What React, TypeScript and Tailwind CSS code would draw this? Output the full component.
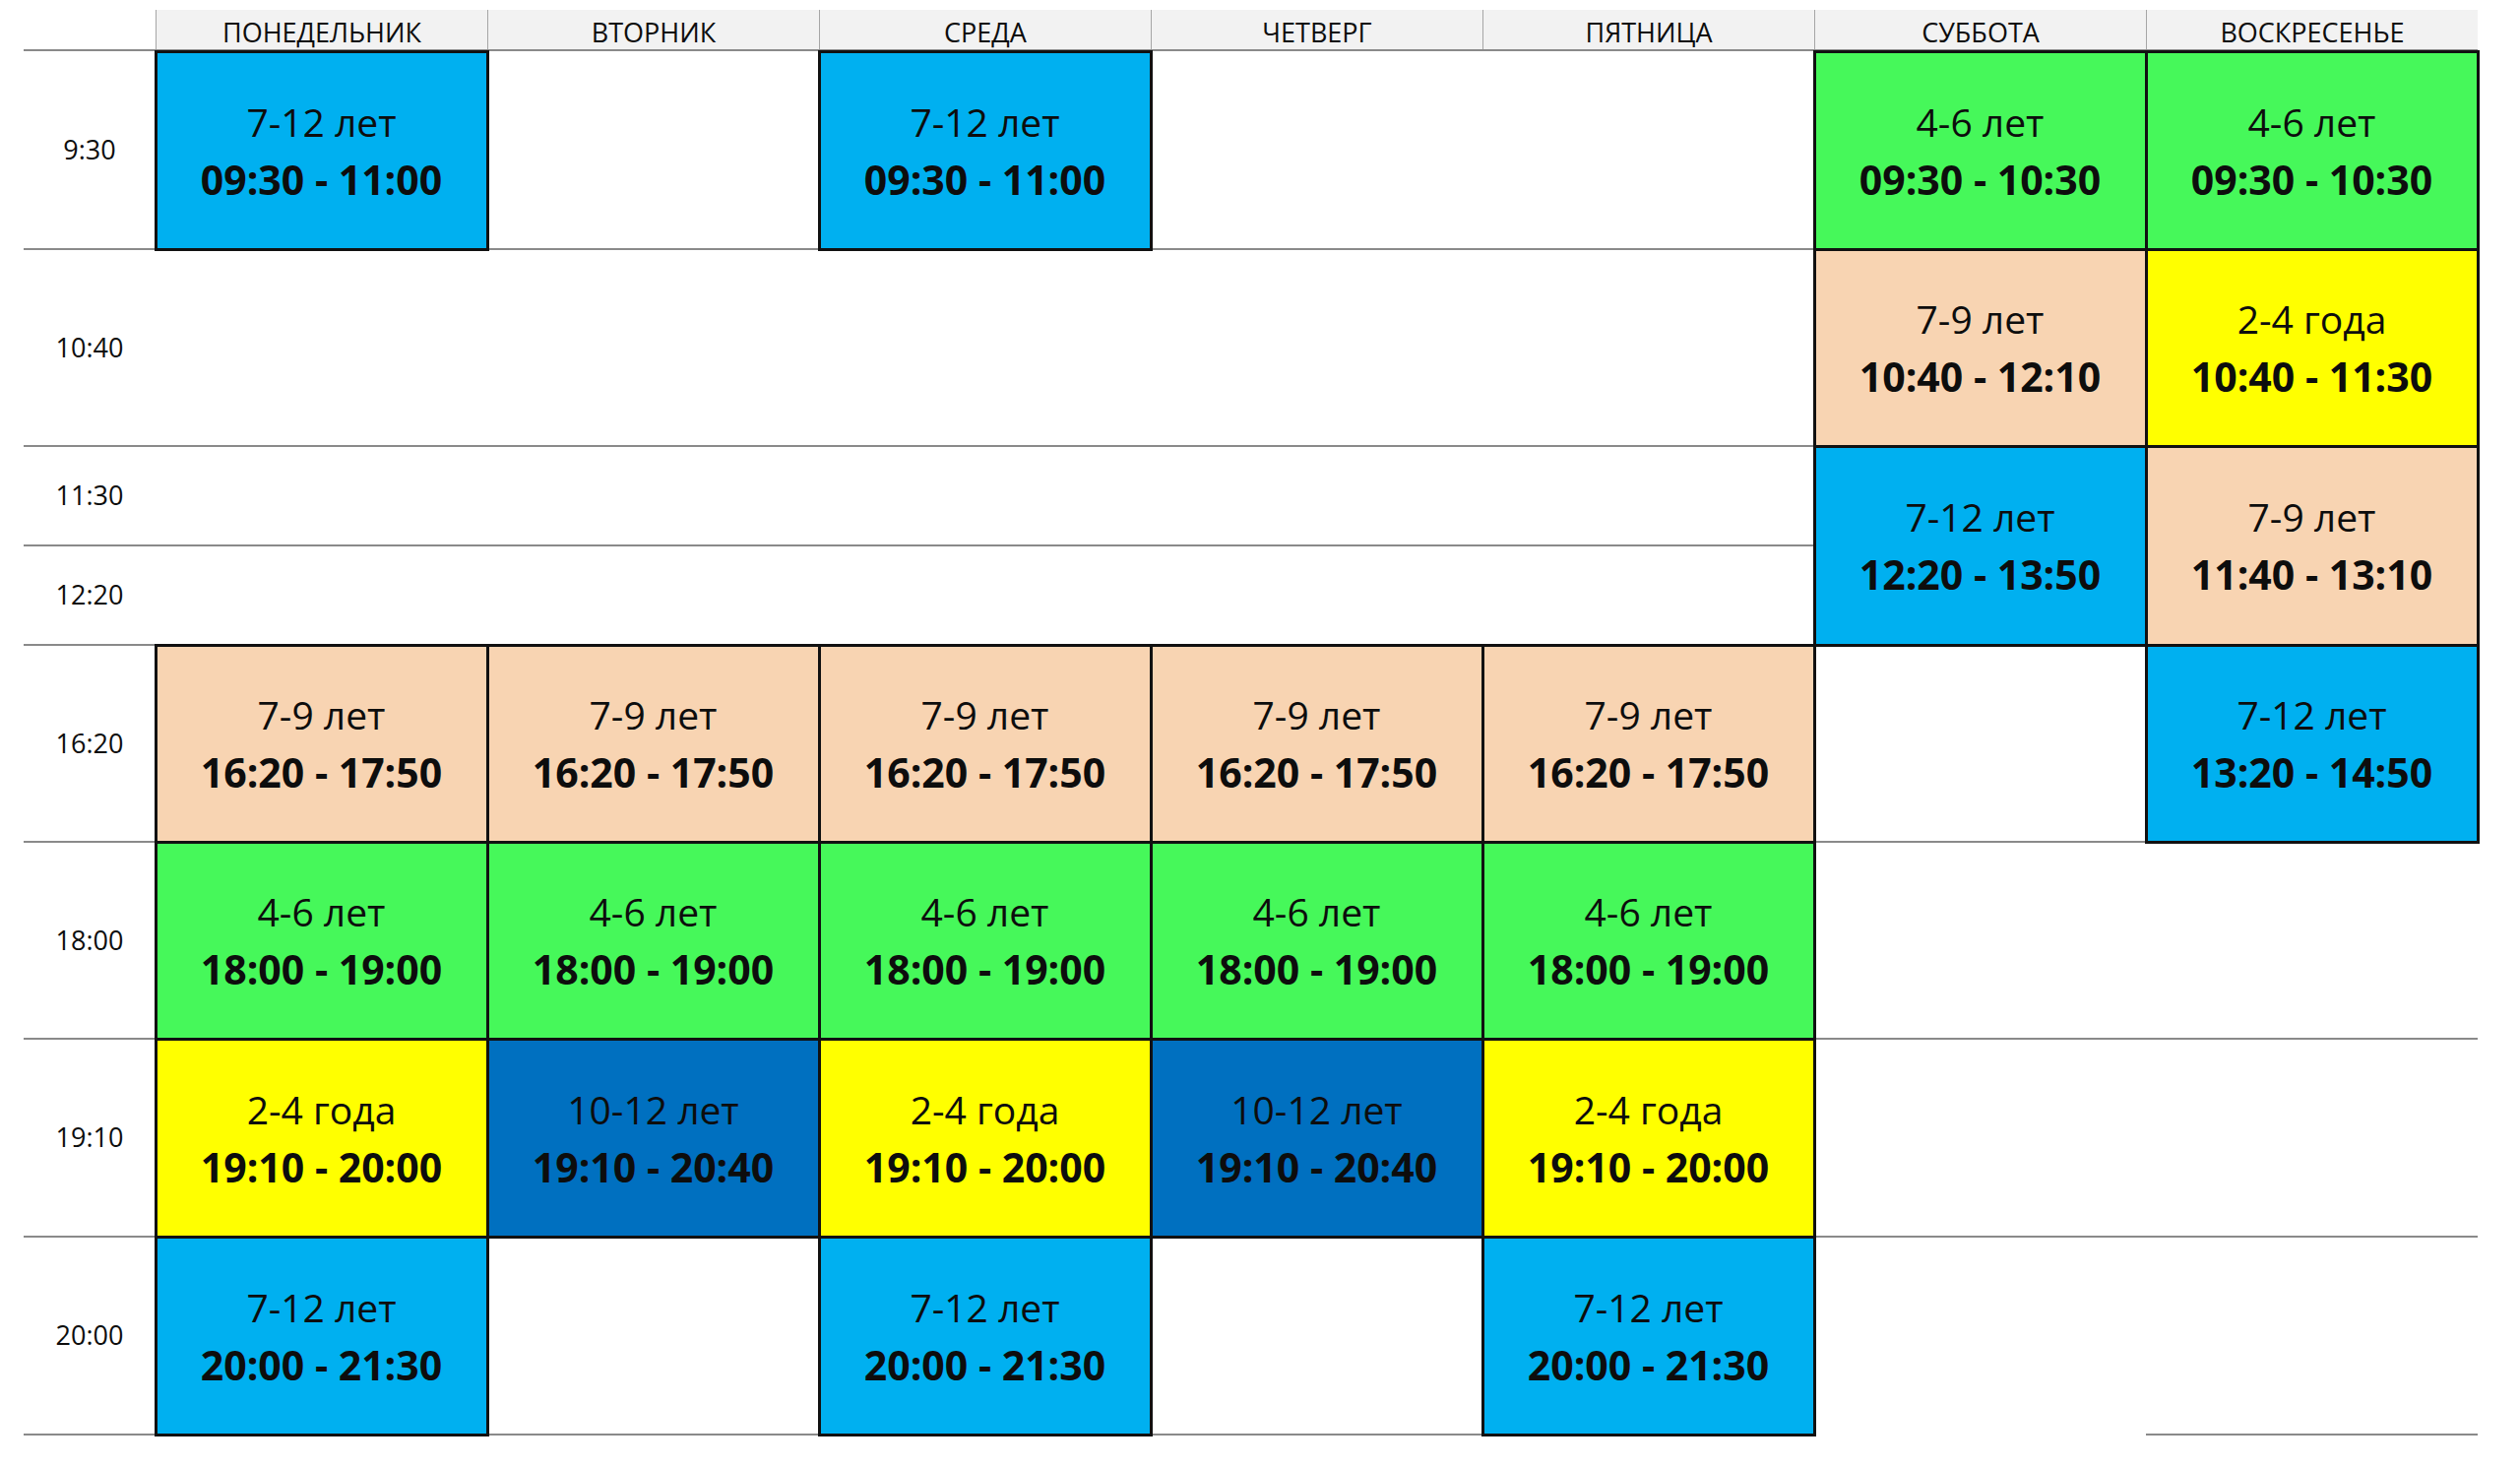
const days = ["ПОНЕДЕЛЬНИК", "ВТОРНИК", "СРЕДА", "ЧЕТВЕРГ", "ПЯТНИЦА", "СУББОТА", "ВОСКРЕСЕНЬЕ"];

const times = [
  { label: "9:30", row: "row-start-1" },
  { label: "10:40", row: "row-start-2" },
  { label: "11:30", row: "row-start-3" },
  { label: "12:20", row: "row-start-4" },
  { label: "16:20", row: "row-start-5" },
  { label: "18:00", row: "row-start-6" },
  { label: "19:10", row: "row-start-7" },
  { label: "20:00", row: "row-start-8" },
];

const colors = {
  blue: "bg-[#00b0f0]",
  green: "bg-[#46f85a]",
  peach: "bg-[#f8d4b2]",
  yellow: "bg-[#ffff00]",
  navy: "bg-[#0070c0]",
};

type Lesson = { pos: string; color: keyof typeof colors; age: string; time: string };

// pos = колонка + строка (классы пишем целиком)
const lessons: Lesson[] = [
  { pos: "col-start-2 row-start-1", color: "blue", age: "7-12 лет", time: "09:30 - 11:00" },
  { pos: "col-start-4 row-start-1", color: "blue", age: "7-12 лет", time: "09:30 - 11:00" },
  { pos: "col-start-7 row-start-1", color: "green", age: "4-6 лет", time: "09:30 - 10:30" },
  { pos: "col-start-8 row-start-1", color: "green", age: "4-6 лет", time: "09:30 - 10:30" },

  { pos: "col-start-7 row-start-2", color: "peach", age: "7-9 лет", time: "10:40 - 12:10" },
  { pos: "col-start-8 row-start-2", color: "yellow", age: "2-4 года", time: "10:40 - 11:30" },

  { pos: "col-start-7 row-start-3 row-span-2", color: "blue", age: "7-12 лет", time: "12:20 - 13:50" },
  { pos: "col-start-8 row-start-3 row-span-2", color: "peach", age: "7-9 лет", time: "11:40 - 13:10" },

  { pos: "col-start-2 row-start-5", color: "peach", age: "7-9 лет", time: "16:20 - 17:50" },
  { pos: "col-start-3 row-start-5", color: "peach", age: "7-9 лет", time: "16:20 - 17:50" },
  { pos: "col-start-4 row-start-5", color: "peach", age: "7-9 лет", time: "16:20 - 17:50" },
  { pos: "col-start-5 row-start-5", color: "peach", age: "7-9 лет", time: "16:20 - 17:50" },
  { pos: "col-start-6 row-start-5", color: "peach", age: "7-9 лет", time: "16:20 - 17:50" },
  { pos: "col-start-8 row-start-5", color: "blue", age: "7-12 лет", time: "13:20 - 14:50" },

  { pos: "col-start-2 row-start-6", color: "green", age: "4-6 лет", time: "18:00 - 19:00" },
  { pos: "col-start-3 row-start-6", color: "green", age: "4-6 лет", time: "18:00 - 19:00" },
  { pos: "col-start-4 row-start-6", color: "green", age: "4-6 лет", time: "18:00 - 19:00" },
  { pos: "col-start-5 row-start-6", color: "green", age: "4-6 лет", time: "18:00 - 19:00" },
  { pos: "col-start-6 row-start-6", color: "green", age: "4-6 лет", time: "18:00 - 19:00" },

  { pos: "col-start-2 row-start-7", color: "yellow", age: "2-4 года", time: "19:10 - 20:00" },
  { pos: "col-start-3 row-start-7", color: "navy", age: "10-12 лет", time: "19:10 - 20:40" },
  { pos: "col-start-4 row-start-7", color: "yellow", age: "2-4 года", time: "19:10 - 20:00" },
  { pos: "col-start-5 row-start-7", color: "navy", age: "10-12 лет", time: "19:10 - 20:40" },
  { pos: "col-start-6 row-start-7", color: "yellow", age: "2-4 года", time: "19:10 - 20:00" },

  { pos: "col-start-2 row-start-8", color: "blue", age: "7-12 лет", time: "20:00 - 21:30" },
  { pos: "col-start-4 row-start-8", color: "blue", age: "7-12 лет", time: "20:00 - 21:30" },
  { pos: "col-start-6 row-start-8", color: "blue", age: "7-12 лет", time: "20:00 - 21:30" },
];

// серые линии между строками
const lines = [
  "col-[1/9] row-start-1",
  "col-[1/9] row-start-2",
  "col-[1/7] row-start-3",
  "col-[1/9] row-start-4",
  "col-[1/9] row-start-5",
  "col-[1/9] row-start-6",
  "col-[1/9] row-start-7",
  "col-[1/7] row-start-8",
  "col-[8/9] row-start-8",
];

export default function App() {
  return (
    <div className="min-h-screen bg-white pl-[24px] pt-[10px] text-[#0d0d0d]" style={{ fontFamily: '"Open Sans", "Liberation Sans", sans-serif' }}>
      <div className="grid h-[42px] w-[2493px] grid-cols-[134px_repeat(7,337px)] border-b-2 border-[#8a8a8a]">
        <div />
        {days.map((d) => (
          <div key={d} className="flex items-center justify-center border-l border-[#a6a6a6] bg-[#f2f2f2] pt-[4px] text-[27px] leading-none">
            {d}
          </div>
        ))}
      </div>

      <div className="grid w-[2493px] grid-cols-[134px_repeat(7,337px)] grid-rows-[201px_200px_101px_101px_200px_200px_201px_201px]">
        {lines.map((l) => (
          <div key={l} className={`${l} -mb-px h-[2px] self-end bg-[#8a8a8a]`} />
        ))}

        {times.map((t) => (
          <div key={t.label} className={`col-start-1 ${t.row} flex items-center justify-center text-[27px]`}>
            {t.label}
          </div>
        ))}

        {lessons.map((s) => (
          <div
            key={s.pos}
            className={`${s.pos} ${colors[s.color]} z-10 -m-[1.5px] flex flex-col items-center justify-center border-[3px] border-[#111]`}
          >
            <div className="text-[39px] leading-[58px]">{s.age}</div>
            <div className="text-[41px] font-bold leading-[58px]">{s.time}</div>
          </div>
        ))}
      </div>
    </div>
  );
}
